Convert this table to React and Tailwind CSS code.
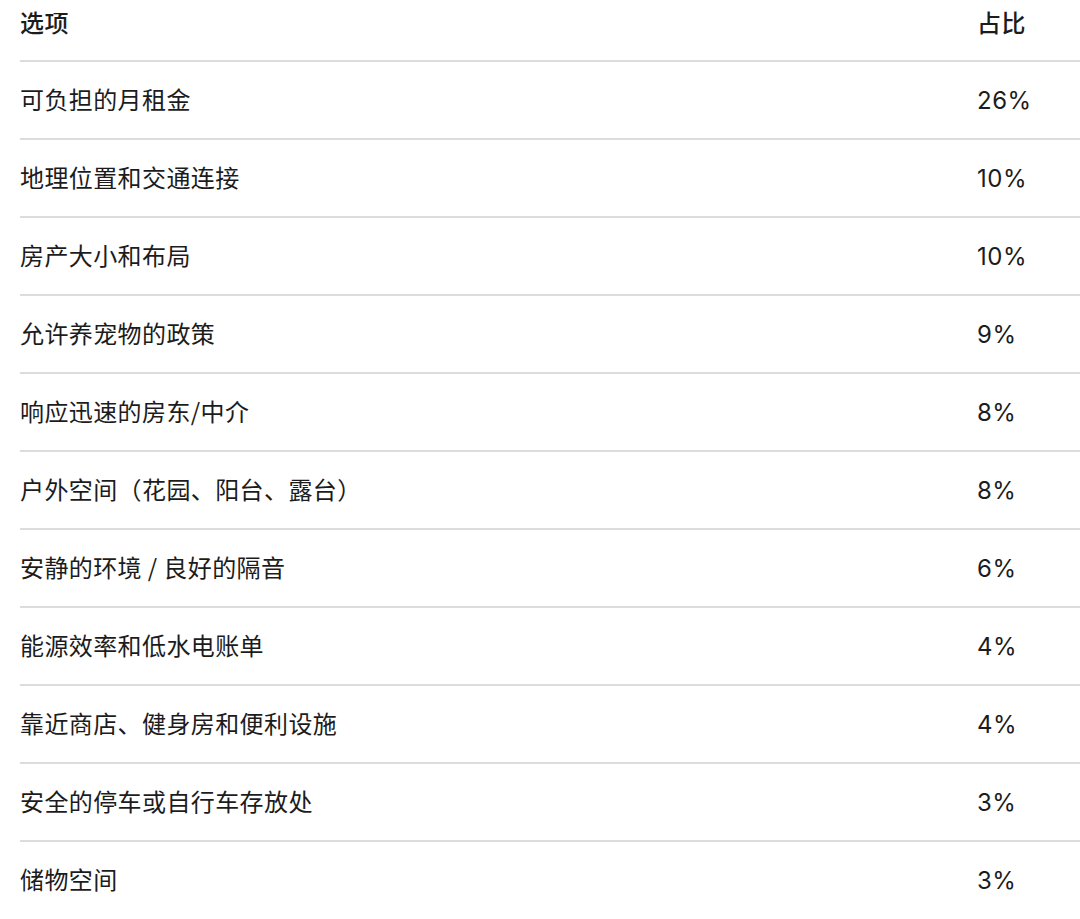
export default function App() {
  const rows = [
    ["可负担的月租金", "26%"],
    ["地理位置和交通连接", "10%"],
    ["房产大小和布局", "10%"],
    ["允许养宠物的政策", "9%"],
    ["响应迅速的房东/中介", "8%"],
    ["户外空间（花园、阳台、露台）", "8%"],
    ["安静的环境 / 良好的隔音", "6%"],
    ["能源效率和低水电账单", "4%"],
    ["靠近商店、健身房和便利设施", "4%"],
    ["安全的停车或自行车存放处", "3%"],
    ["储物空间", "3%"],
  ];
  return (
    <div
      className="w-[1080px] h-[919px] overflow-hidden bg-white pl-[20px] text-[#1c1c1c]"
      style={{ fontFamily: '"Noto Sans CJK SC", "Noto Sans", sans-serif' }}
    >
      <div className="grid grid-cols-[957px_1fr] h-[60px] pb-[17px] items-center text-[24px] font-medium leading-none tracking-[0.4px]">
        <div>选项</div>
        <div>占比</div>
      </div>
      {rows.map(([a, b]) => (
        <div
          key={a + b}
          className="grid grid-cols-[957px_1fr] h-[78px] border-t-2 border-[#dcdcdc] items-center pb-[2px] text-[24px] leading-none"
        >
          <div className="tracking-[0.4px]">{a}</div>
          <div
            className="tracking-[0.5px] pt-[4px]"
            style={{ fontFamily: 'Inter, "Noto Sans", sans-serif' }}
          >
            {b}
          </div>
        </div>
      ))}
    </div>
  );
}
